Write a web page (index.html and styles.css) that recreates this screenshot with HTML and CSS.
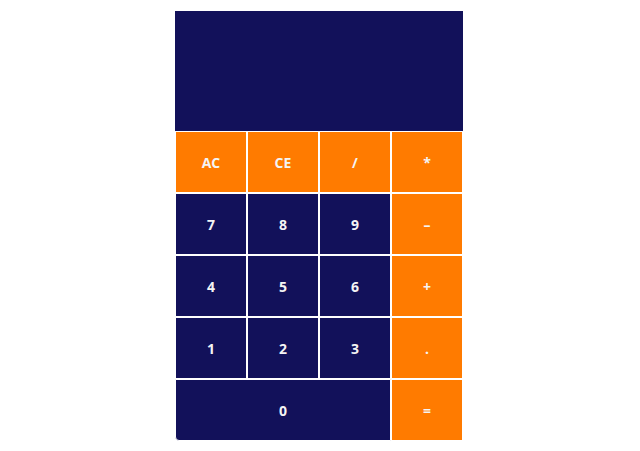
FILE: index.html
```html
<!DOCTYPE html>
<html>
<head>
<meta charset="utf-8">
<link rel="stylesheet" href="styles.css">
</head>
<body>
<div class="calc">
  <div class="display"></div>
  <div class="keys">
    <button class="key op">AC</button>
    <button class="key op">CE</button>
    <button class="key op">/</button>
    <button class="key op">*</button>
    <button class="key">7</button>
    <button class="key">8</button>
    <button class="key">9</button>
    <button class="key op">–</button>
    <button class="key">4</button>
    <button class="key">5</button>
    <button class="key">6</button>
    <button class="key op">+</button>
    <button class="key">1</button>
    <button class="key">2</button>
    <button class="key">3</button>
    <button class="key op">.</button>
    <button class="key zero">0</button>
    <button class="key op">=</button>
  </div>
</div>
</body>
</html>
```
FILE: styles.css
```css
html, body {
  margin: 0;
  background: #ffffff;
}
body {
  padding: 11px 0 0 175px;
}
.calc {
  width: 288px;
}
.display {
  height: 120px;
  background: #12115a;
}
.keys {
  display: grid;
  grid-template-columns: repeat(4, 72px);
  grid-auto-rows: 62px;
}
.key {
  margin: 0;
  padding: 0;
  border: 1px solid #ffffff;
  background: #12115a;
  color: #f4f4f4;
  font-family: "Open Sans", sans-serif;
  font-weight: 700;
  font-size: 14px;
  display: flex;
  align-items: center;
  justify-content: center;
}
.op {
  background: #ff7b00;
}
.zero {
  grid-column: span 3;
  border-bottom-left-radius: 4px;
}
```
